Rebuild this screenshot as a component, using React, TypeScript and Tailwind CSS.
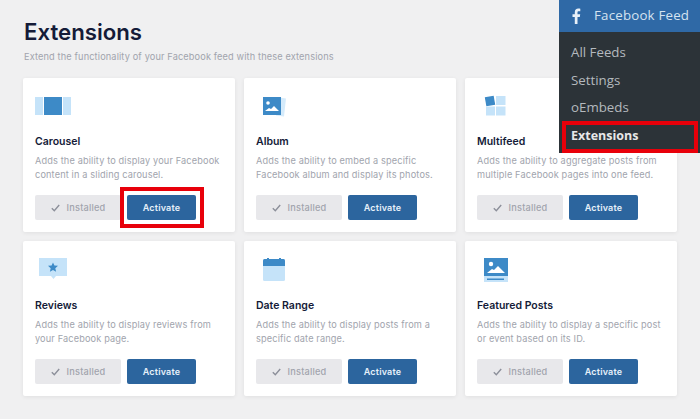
import type { ReactNode } from 'react';

interface Extension {
  name: string;
  lines: [string, string];
  icon: ReactNode;
  highlight?: boolean;
}

const CarouselIcon = (
  <svg width="36" height="22" viewBox="0 0 36 22">
    <rect x="0" y="2" width="8" height="18" fill="#c5e3f9" />
    <rect x="28" y="2" width="8" height="18" fill="#c5e3f9" />
    <rect x="9" y="2" width="18" height="18" fill="#3d8ac7" />
  </svg>
);

const AlbumIcon = (
  <svg width="36" height="22" viewBox="0 0 36 22">
    <path d="M20 2l10 1.500-2 18-8-1z" fill="#d5ebfb" />
    <rect x="7" y="2" width="18" height="18" fill="#3d8ac7" />
    <circle cx="12" cy="8" r="1.800" fill="#fff" />
    <path d="M9 16l4-3 2 1 3-3 5 5z" fill="#fff" />
  </svg>
);

const MultifeedIcon = (
  <svg width="36" height="22" viewBox="0 0 36 22">
    <rect x="8.500" y="1.500" width="9" height="9" fill="#3d8ac7" transform="rotate(-10 13 6)" />
    <rect x="19" y="1" width="9.500" height="9" fill="#c5e3f9" />
    <rect x="9" y="11.500" width="9" height="9" fill="#c5e3f9" />
    <rect x="19" y="11.500" width="9.500" height="9" fill="#c5e3f9" />
  </svg>
);

const ReviewsIcon = (
  <svg width="36" height="24" viewBox="0 0 36 24">
    <path d="M4 0h28v18H21l-2.500 3-2.500-3H4z" fill="#c5e3f9" />
    <path d="M18 4.500l1.400 3 3.600.3-2.700 2.400.8 3.500-3.100-1.800-3.100 1.800.8-3.500-2.700-2.400 3.600-.3z" fill="#3d8ac7" />
  </svg>
);

const DateIcon = (
  <svg width="36" height="24" viewBox="0 0 36 24">
    <rect x="7" y="1" width="22" height="22" rx="1.500" fill="#c5e3f9" />
    <path d="M7 2.500A1.500 1.500 0 0 1 8.500 1h19A1.500 1.500 0 0 1 29 2.500V8H7z" fill="#3d8ac7" />
    <rect x="11" y="0" width="2" height="3" fill="#3d8ac7" />
    <rect x="23" y="0" width="2" height="3" fill="#3d8ac7" />
  </svg>
);

const FeaturedIcon = (
  <svg width="36" height="26" viewBox="0 0 36 26">
    <rect x="7" y="0" width="24" height="24" fill="#c5e3f9" />
    <rect x="7" y="0" width="24" height="18" fill="#3d8ac7" />
    <circle cx="14" cy="6" r="2.200" fill="#fff" />
    <path d="M10 15l5-4 2 1 4-4 7 7z" fill="#fff" />
    <rect x="10" y="20.500" width="17" height="1.500" fill="#3d8ac7" />
  </svg>
);

const extensions: Extension[] = [
  { name: 'Carousel', lines: ['Adds the ability to display your Facebook', 'content in a sliding carousel.'], icon: CarouselIcon, highlight: true },
  { name: 'Album', lines: ['Adds the ability to embed a specific', 'Facebook album and display its photos.'], icon: AlbumIcon },
  { name: 'Multifeed', lines: ['Adds the ability to aggregate posts from', 'multiple Facebook pages into one feed.'], icon: MultifeedIcon },
  { name: 'Reviews', lines: ['Adds the ability to display reviews from', 'your Facebook page.'], icon: ReviewsIcon },
  { name: 'Date Range', lines: ['Adds the ability to display posts from a', 'specific date range.'], icon: DateIcon },
  { name: 'Featured Posts', lines: ['Adds the ability to display a specific post', 'or event based on its ID.'], icon: FeaturedIcon },
];

function ExtensionCard({ ext }: { ext: Extension }) {
  return (
    <div className="flex flex-col rounded-[2px] bg-white px-3 pt-[17px] shadow-[0_1px_4px_rgba(0,0,0,0.07)]">
      <div className="flex h-[27px] items-start">{ext.icon}</div>
      <h3 className="mt-auto text-[10.500px] leading-[15px] font-semibold text-[#141b38]">{ext.name}</h3>
      <p className="mt-[5px] text-[9.200px] leading-[13.500px] tracking-[0.14px] whitespace-nowrap text-[#a1a4ad]">
        {ext.lines[0]}
        <br />
        {ext.lines[1]}
      </p>
      <div className="relative mt-[14px] mb-[12px] flex gap-[6px]">
        <div className="flex h-[25px] w-[86px] items-center justify-center gap-[7px] rounded-[2px] bg-[#e8e8eb] text-[9.200px] font-medium tracking-[0.2px] text-[#a1a4ad]">
          <svg width="9" height="8" viewBox="0 0 9 8" fill="none" stroke="#8c8f9a" strokeWidth="1.400">
            <path d="M.8 4.200l2.500 2.500L8.200 1" />
          </svg>
          Installed
        </div>
        <div className="flex h-[25px] w-[69px] items-center justify-center rounded-[2px] bg-[#2c659e] text-[9px] font-semibold tracking-[0.2px] text-[#e6f0fa]">
          Activate
        </div>
        {ext.highlight && (
          <div className="absolute top-[-8px] left-[85px] h-[41px] w-[84px] border-4 border-[#e8000a]" />
        )}
      </div>
    </div>
  );
}

export default function App() {
  return (
    <div className="relative h-[419px] w-[700px] overflow-hidden bg-[#f0f0f1] pt-[17px] pl-[23px] font-['Inter',sans-serif]">
      <h1 className="pl-px text-[22.200px] leading-[30px] font-semibold text-[#141b38]">Extensions</h1>
      <p className="mt-[3px] pl-px text-[9.200px] leading-[14px] tracking-[0.14px] text-[#a1a4ad]">
        Extend the functionality of your Facebook feed with these extensions
      </p>

      <div className="mt-[14px] grid w-[654px] grid-cols-3 grid-rows-[154px_155px] gap-[9px]">
        {extensions.map((ext) => (
          <ExtensionCard key={ext.name} ext={ext} />
        ))}
      </div>

      {/* WordPress admin submenu laid over the page */}
      <div className="absolute top-0 right-0 h-[153px] w-[141px] bg-[#2c3338] font-['Open_Sans',sans-serif]">
        <div className="flex h-[32px] items-center bg-[#2f69a6] pl-[12px] text-[13.300px] text-[#d5e3f1]">
          <svg width="10" height="16" viewBox="0 0 10 16" fill="#e8f0f8">
            <path d="M6.500 16V9h2.300l.4-2.800H6.500V4.500c0-.8.3-1.300 1.400-1.300h1.400V.7C9 .7 8.200.6 7.300.6 5.200.6 3.800 1.900 3.800 4.200v2H1.500V9h2.300v7z" />
          </svg>
          <span className="ml-[13px] tracking-[0.2px]">Facebook Feed</span>
        </div>
        <div className="flex flex-col pt-[7px] pl-[12px] text-[13.300px] leading-[27.500px] text-[#b4b9be]">
          <span>All Feeds</span>
          <span>Settings</span>
          <span>oEmbeds</span>
          <span className="text-[12.500px] font-bold text-[#e8e8e8]">Extensions</span>
        </div>
        <div className="absolute top-[121px] left-[3px] h-[32px] w-[136px] border-4 border-[#e8000a]" />
      </div>
    </div>
  );
}
